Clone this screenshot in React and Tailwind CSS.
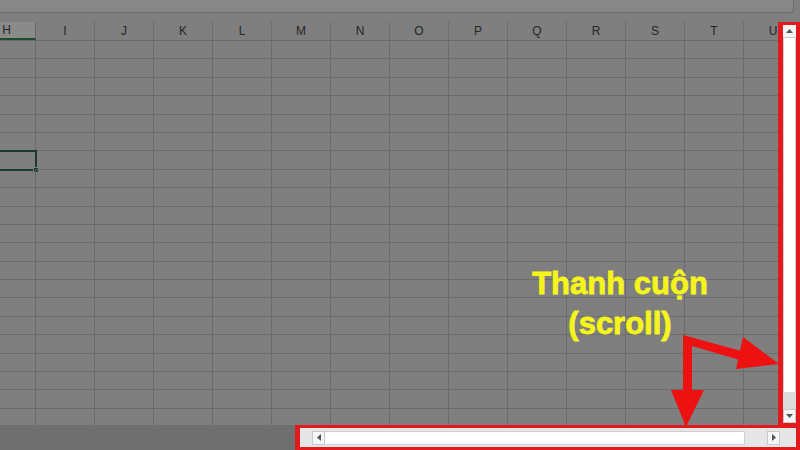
import React from "react";

const COLS = ["H","I","J","K","L","M","N","O","P","Q","R","S","T","U"];
const ROWS = Array.from({ length: 21 }, (_, i) => i);

function TriUp() {
  return (
    <svg width="7" height="4" viewBox="0 0 7 4"><polygon points="0,4 7,4 3.5,0" fill="#555" /></svg>
  );
}
function TriDown() {
  return (
    <svg width="7" height="4" viewBox="0 0 7 4"><polygon points="0,0 7,0 3.5,4" fill="#555" /></svg>
  );
}
function TriLeft() {
  return (
    <svg width="4" height="7" viewBox="0 0 4 7"><polygon points="4,0 4,7 0,3.5" fill="#555" /></svg>
  );
}
function TriRight() {
  return (
    <svg width="4" height="7" viewBox="0 0 4 7"><polygon points="0,0 0,7 4,3.5" fill="#555" /></svg>
  );
}

export default function App() {
  return (
    <div
      className="w-[800px] h-[450px] bg-[#7f7f7f] relative overflow-hidden flex flex-col"
      style={{ fontFamily: '"Liberation Sans", Arial, sans-serif' }}
    >
      {/* formula bar strip */}
      <div className="h-[14px] flex shrink-0">
        <div className="w-[794px] h-[13px] bg-[#878787] border-b border-r border-[#6b6b6b] rounded-br-[3px]" />
      </div>

      {/* middle */}
      <div className="h-[411px] flex shrink-0">
        <div className="flex-1 overflow-hidden flex flex-col">
          <div className="h-[8px] shrink-0" />
          {/* header */}
          <div className="h-[19px] flex shrink-0 ml-[-23px] border-b border-[#6b6b6b]">
            {COLS.map((c, i) => (
              <div
                key={c}
                className={
                  i === 0
                    ? "w-[59px] shrink-0 flex items-center justify-end pr-[24px] bg-[#8a8a8a] border-r border-[#6b6b6b] border-b-2 border-b-[#1e4a31] text-[12px] text-[#262626]"
                    : "w-[59px] shrink-0 flex items-center justify-center border-r border-[#6e6e6e] text-[12px] text-[#262626]"
                }
              >
                {c}
              </div>
            ))}
          </div>
          {/* rows */}
          {ROWS.map((r) => (
            <div key={r} className="h-[18.4px] flex shrink-0 ml-[-23px]">
              {COLS.map((c, i) => (
                <div
                  key={c}
                  className="w-[59px] shrink-0 border-r border-b border-[#6b6b6b] relative"
                >
                  {r === 6 && i === 0 && (
                    <>
                      <div className="absolute left-[-2px] right-[-2px] top-[-1px] bottom-[-2px] border-2 border-[#1c3a2a]" />
                      <div className="absolute right-[-4px] bottom-[-4px] w-[6px] h-[6px] bg-[#1c3a2a] border border-[#7f7f7f]" />
                    </>
                  )}
                </div>
              ))}
            </div>
          ))}
        </div>

        {/* vertical scrollbar */}
        <div className="w-[22px] mt-[8px] shrink-0 border-t-[3px] border-b-[2px] border-l-[5px] border-r-[4px] border-[#e11b1d] flex flex-col bg-[#e6e6e6]">
          <div className="h-[13px] flex items-center justify-center bg-[#f4f4f4] border-b border-[#cfcfcf]">
            <TriUp />
          </div>
          <div className="h-[354px] bg-white border-x border-[#d0d0d0]" />
          <div className="flex-1 bg-[#dcdcdc]" />
          <div className="h-[14px] flex items-center justify-center bg-[#f7f7f7] border border-[#c8c8c8]">
            <TriDown />
          </div>
        </div>
      </div>

      {/* bottom status + horizontal scrollbar */}
      <div className="flex-1 flex">
        <div className="w-[295px] bg-[#6f6f6f] shrink-0" />
        <div className="flex-1 border-t-[3px] border-b-[3px] border-l-[5px] border-r-[4px] border-[#e11b1d] bg-[#e6e6e6] flex items-center pl-[12px] pr-[16px]">
          <div className="w-[13px] h-[14px] flex items-center justify-center bg-[#f7f7f7] border border-[#c8c8c8] shrink-0">
            <TriLeft />
          </div>
          <div className="w-[420px] h-[14px] bg-white border-y border-r border-[#cfcfcf] shrink-0" />
          <div className="flex-1" />
          <div className="w-[13px] h-[14px] flex items-center justify-center bg-[#f7f7f7] border border-[#c8c8c8] shrink-0">
            <TriRight />
          </div>
        </div>
      </div>

      {/* annotation text */}
      <div
        className="absolute left-[500px] top-[264px] w-[240px] text-center text-[31px] leading-[40px] font-bold text-[#f5f51c] [-webkit-text-stroke:0.8px_#f5f51c]"
        style={{ fontFamily: '"Liberation Sans", Arial, sans-serif' }}
      >
        <div>Thanh cuộn</div>
        <div>(scroll)</div>
      </div>

      {/* annotation arrows */}
      <svg className="absolute left-0 top-0" width="800" height="450" viewBox="0 0 800 450">
        <polygon
          points="683,335 745,352 743,361 692,346 692,392 683,392"
          fill="#ee1111"
        />
        <polygon points="671,390 704,390 686,427" fill="#ee1111" />
        <polygon points="743,337 736,369 779,364" fill="#ee1111" />
      </svg>
    </div>
  );
}
